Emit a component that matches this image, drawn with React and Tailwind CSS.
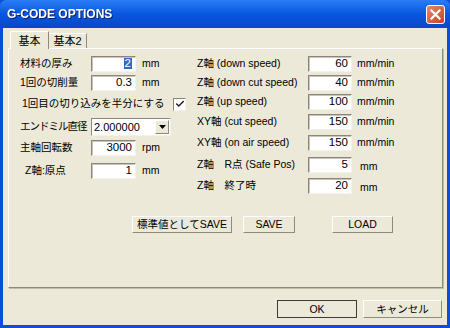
import { Check } from "lucide-react";

// classic win32 sunken edit box
function Edit({ value, selected, w = "w-[45px]" }) {
  return (
    <div
      className={`${w} h-[16px] shrink-0 bg-white border-t border-l border-t-[#8a877a] border-l-[#8a877a] border-b border-r border-b-[#f4f2ea] border-r-[#f4f2ea] shadow-[inset_1px_1px_0_#c8c5b8] flex items-center justify-end pr-[3px] text-[11.5px] leading-none text-black`}
    >
      {selected ? (
        <span className="bg-[#3168c8] text-white px-[1px]">{value}</span>
      ) : (
        value
      )}
    </div>
  );
}

function Btn({ children, className = "", def }) {
  return (
    <div
      className={`h-[17px] shrink-0 whitespace-nowrap flex items-center justify-center bg-[#ece9d8] text-[10.5px] leading-none text-black border ${
        def
          ? "border-[#3a3a3a]"
          : "border-t-white border-l-white border-b-[#8d8a7e] border-r-[#8d8a7e]"
      } ${className}`}
    >
      {children}
    </div>
  );
}

function LeftRow({ label, children, className = "" }) {
  return (
    <div className={`flex items-center whitespace-nowrap ${className}`}>
      <span className="w-[71px] shrink-0">{label}</span>
      {children}
    </div>
  );
}

function RightRow({ label, value, unit = "mm/min", className = "", unitClass = "" }) {
  return (
    <div className={`flex items-center whitespace-nowrap ${className}`}>
      <span className="w-[111px] shrink-0">{label}</span>
      <Edit value={value} w="w-[44px]" />
      <span className={`ml-[5px] text-[10.5px] ${unitClass}`}>{unit}</span>
    </div>
  );
}

export default function App() {
  return (
    <div
      className="w-[450px] h-[328px] flex flex-col bg-[#0a4fd8] overflow-hidden text-[10px] text-black"
      style={{ fontFamily: '"Liberation Sans", "Noto Sans CJK JP", sans-serif' }}
    >
      {/* title bar */}
      <div className="h-[28px] shrink-0 flex items-center justify-between pl-[7px] pr-[5px] bg-gradient-to-b from-[#2a7cf4] via-[#0856e0] to-[#0a47c8] rounded-t-[6px]">
        <span className="text-white font-bold text-[12px] drop-shadow-[1px_1px_0_#0a246a]">
          G-CODE OPTIONS
        </span>
        <div className="w-[19px] h-[19px] rounded-[3px] border border-white bg-gradient-to-br from-[#e8876a] to-[#c5411e] flex items-center justify-center">
          <svg width="11" height="11" viewBox="0 0 11 11">
            <path d="M1.5 1.5 L9.5 9.5 M9.5 1.5 L1.5 9.5" stroke="white" strokeWidth="2.2" strokeLinecap="square" />
          </svg>
        </div>
      </div>

      {/* body */}
      <div className="flex-1 flex flex-col mx-[3px] mb-[3px] bg-[#ece9d8] pl-[5px] pr-[4px] pt-[3px]">
        {/* tabs */}
        <div className="flex items-end h-[17px] pl-[2px] relative z-10 text-[11px]">
          <div className="w-[39px] h-[18px] flex items-center justify-center bg-[#ece9d8] border-t border-l border-t-white border-l-white border-r border-r-[#8d8a7e] mb-[-1px] pt-[1px]">
            基本
          </div>
          <div className="w-[38px] h-[15px] flex items-center justify-center border-t border-t-white border-r border-r-[#8d8a7e]">
            基本2
          </div>
        </div>

        {/* tab panel */}
        <div className="h-[240px] border border-t-white border-l-white border-b-[#8d8a7e] border-r-[#8d8a7e] shadow-[1px_1px_0_#c0bdb0] flex flex-col">
          <div className="flex pt-[5px]">
            {/* left column */}
            <div className="flex flex-col w-[188px] pl-[11px] text-[10.5px]">
              <LeftRow label="材料の厚み" className="h-[19px]">
                <Edit value="2" selected />
                <span className="ml-[6px]">mm</span>
              </LeftRow>
              <LeftRow label="1回の切削量" className="h-[19px]">
                <Edit value="0.3" />
                <span className="ml-[6px]">mm</span>
              </LeftRow>
              <div className="h-[20px] mt-[2px] flex items-center pl-[2px] whitespace-nowrap">
                <span className="w-[151px] shrink-0">1回目の切り込みを半分にする</span>
                <div className="w-[13px] h-[13px] bg-white border border-t-[#8a877a] border-l-[#8a877a] border-b-[#f4f2ea] border-r-[#f4f2ea] flex items-center justify-center">
                  <Check size={10} strokeWidth={3.5} color="#202020" />
                </div>
              </div>
              <LeftRow
                label={<span className="tracking-[-1px]">エンドミル直径</span>}
                className="h-[20px] mt-[3px]"
              >
                <div className="w-[80px] h-[18px] shrink-0 bg-white border border-t-[#8a877a] border-l-[#8a877a] border-b-[#f4f2ea] border-r-[#f4f2ea] flex items-center justify-between">
                  <span className="pl-[2px] leading-none text-[11px]">2.000000</span>
                  <div className="w-[14px] h-[14px] mr-[1px] bg-[#ece9d8] border border-t-white border-l-white border-b-[#8d8a7e] border-r-[#8d8a7e] flex items-center justify-center">
                    <svg width="7" height="4" viewBox="0 0 7 4">
                      <path d="M0 0 H7 L3.5 4 Z" fill="#000" />
                    </svg>
                  </div>
                </div>
              </LeftRow>
              <LeftRow label="主軸回転数" className="h-[20px] mt-[1px]">
                <Edit value="3000" />
                <span className="ml-[6px]">rpm</span>
              </LeftRow>
              <LeftRow label={<span className="pl-[5px]">Z軸:原点</span>} className="h-[20px] mt-[3px]">
                <Edit value="1" />
                <span className="ml-[6px]">mm</span>
              </LeftRow>
            </div>

            {/* right column */}
            <div className="flex flex-col text-[10.5px]">
              <RightRow label="Z軸 (down speed)" value="60" className="h-[19px]" />
              <RightRow label="Z軸 (down cut speed)" value="40" className="h-[19px]" />
              <RightRow label="Z軸 (up speed)" value="100" className="h-[19px]" />
              <RightRow label="XY軸 (cut speed)" value="150" className="h-[20px] mt-[1px]" />
              <RightRow label="XY軸 (on air speed)" value="150" className="h-[20px] mt-[1px]" />
              <RightRow label="Z軸　R点 (Safe Pos)" value="5" unit="mm" unitClass="pt-[5px] ml-[8px]" className="h-[21px] mt-[1px]" />
              <RightRow label="Z軸　終了時" value="20" unit="mm" unitClass="pt-[5px] ml-[8px]" className="h-[21px]" />
            </div>
          </div>

          {/* save/load buttons */}
          <div className="flex mt-[20px] pl-[123px]">
            <Btn className="w-[100px]">標準値としてSAVE</Btn>
            <Btn className="w-[52px] ml-[11px]">SAVE</Btn>
            <Btn className="w-[61px] ml-[37px]">LOAD</Btn>
          </div>
        </div>

        {/* ok / cancel */}
        <div className="flex justify-end mt-[12px] pr-[1px]">
          <Btn def className="w-[80px] h-[18px]">OK</Btn>
          <Btn className="w-[79px] h-[18px] ml-[6px]">キャンセル</Btn>
        </div>
      </div>
    </div>
  );
}
